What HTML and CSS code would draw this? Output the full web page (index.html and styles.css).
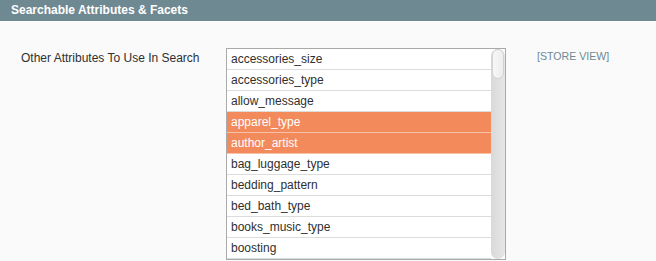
FILE: index.html
```html
<!DOCTYPE html>
<html lang="en">
	<head>
		<meta charset="utf-8">
		<title>Searchable Attributes &amp; Facets</title>
		<link rel="stylesheet" href="styles.css">
	</head>
	<body>
		<div class="entry-edit-head">
			<h4>Searchable Attributes &amp; Facets</h4>
		</div>
		<div class="fieldset">
			<div class="form-row">
				<label class="label">Other Attributes To Use In Search</label>
				<div class="multiselect">
					<div class="options">
						<div class="option">accessories_size</div>
						<div class="option">accessories_type</div>
						<div class="option">allow_message</div>
						<div class="option selected">apparel_type</div>
						<div class="option selected">author_artist</div>
						<div class="option">bag_luggage_type</div>
						<div class="option">bedding_pattern</div>
						<div class="option">bed_bath_type</div>
						<div class="option">books_music_type</div>
						<div class="option">boosting</div>
					</div>
					<div class="scrollbar"><div class="thumb"></div></div>
				</div>
				<span class="scope-label">[STORE VIEW]</span>
			</div>
		</div>
	</body>
</html>
```
FILE: styles.css
```css
* {
	box-sizing:border-box}
body {
	background-color:#fafafa;
	color:#2f2f2f;
	font-family:"Liberation Sans", Arial, sans-serif;
	font-size:12px;
	margin:0}
.entry-edit-head {
	background-color:#6f8992;
	border-bottom:1px solid #ffffff;
	height:22px;
	padding:0 11px}
.entry-edit-head h4 {
	color:#ffffff;
	font-size:12px;
	font-weight:bold;
	line-height:21px;
	margin:0}
.fieldset {
	padding:26px 0 0 21px}
.form-row {
	align-items:flex-start;
	display:flex}
.label {
	line-height:20px;
	padding-top:0;
	width:205px}
.multiselect {
	background-color:#ffffff;
	border:1px solid #aaaaaa;
	display:flex;
	height:212px;
	overflow:hidden;
	width:280px}
.options {
	flex:1}
.option {
	border-bottom:1px solid #dcdcdc;
	height:21px;
	line-height:20px;
	padding-left:4px;
	white-space:nowrap}
.option.selected {
	background-color:#f28a5b;
	border-bottom-color:#f5c2a8;
	color:#ffffff}
.scrollbar {
	background:linear-gradient(to right, #d9d9d9, #e6e6e6);
	border-radius:7px;
	padding:0 1px;
	width:14px}
.thumb {
	background:linear-gradient(to right, #f7f7f7, #ededed);
	border:1px solid #d2d2d2;
	border-radius:6px;
	height:30px}
.scope-label {
	color:#6f8992;
	font-size:10.6px;
	line-height:16px;
	margin-left:31px}
```
